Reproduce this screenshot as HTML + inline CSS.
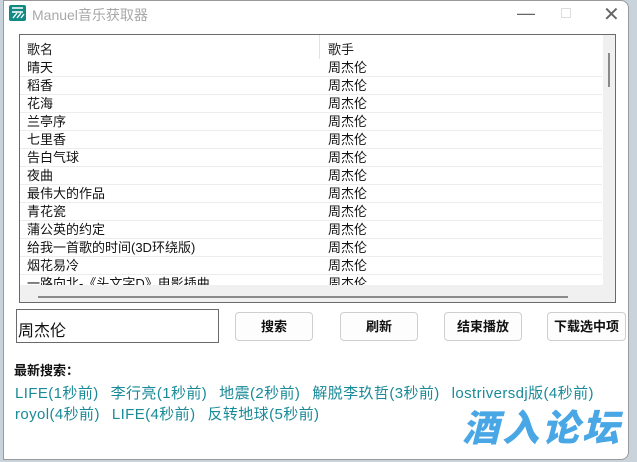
<!DOCTYPE html>
<html><head><meta charset="utf-8"><style>
*{margin:0;padding:0;box-sizing:border-box}
body{width:637px;height:462px;background:#c9d3dc;position:relative;overflow:hidden;font-family:"Liberation Sans","Microsoft YaHei","Noto Sans CJK SC",sans-serif;}
.win{position:absolute;left:3px;top:0;width:626px;height:460px;background:#fff;border:1px solid #9a9a9a;border-radius:0 8px 8px 0;}
.title{position:absolute;left:28px;top:4px;font-size:14px;color:#a8a8a8}
.icon{position:absolute;left:5px;top:4px;width:17px;height:16px;background:#128a84;border-radius:2px}
.list{position:absolute;left:15px;top:33px;width:597px;height:269px;border:1px solid #6a6a6a;background:#fff;overflow:hidden}
.hdr{position:absolute;left:0;top:0;height:24px;width:584px;font-size:13px;color:#222}
.hdr span{position:absolute;top:4px}
.vline{position:absolute;left:299px;top:0;width:1px;height:24px;background:#e2e2e2}
.row{position:absolute;left:0;width:582px;height:18px;border-bottom:1px solid #ececec;font-size:13px;color:#111}
.row span{position:absolute;top:0;line-height:18px}
.vs{position:absolute;right:0;top:0;width:12px;height:251px;background:#f0f0f0}
.vs i{position:absolute;left:5px;top:18px;width:2px;height:34px;background:#8a8a8a}
.hs{position:absolute;left:0;bottom:0;width:597px;height:17px;background:#f0f0f0}
.hs i{position:absolute;left:18px;top:11px;width:530px;height:2px;background:#8a8a8a}
.inp{position:absolute;left:12px;top:308px;width:203px;height:34px;border:1px solid #6a6a6a;font-size:16px;padding:7px 0 0 1px;color:#111}
.btn{position:absolute;top:311px;height:29px;border:1px solid #cfcfcf;border-radius:4px;background:#fdfdfd;font-size:13px;font-weight:bold;text-align:center;line-height:27px;color:#111}
.lbl{position:absolute;left:10px;top:359px;font-size:13px;font-weight:bold;color:#111}
.links{position:absolute;left:11px;top:382px;font-size:15px;line-height:21px;color:#1a8a98;letter-spacing:0.4px}
.links span{margin-right:12px}
.wm{position:absolute;left:458px;top:397px;font-size:37px;font-weight:900;font-style:italic;color:#4aa7e6;letter-spacing:3px}
.ctl{position:absolute;top:0;font-size:18px;color:#666}
</style></head><body>
<div class="win">
<div class="icon"><svg width="17" height="16" viewBox="0 0 17 16"><path d="M3 3h11M3 7h11M4 13l4-5M8 13l4-5M12 13l3-4" stroke="#fff" stroke-width="1.4" fill="none"/></svg></div>
<div class="title">Manuel音乐获取器</div>
<div class="ctl" style="left:513px;top:2px">—</div>
<div style="position:absolute;left:557px;top:7px;width:10px;height:10px;border:1px solid #ddd"></div>
<div class="ctl" style="left:599px;top:1px;font-size:20px">✕</div>
<div class="list">
<div class="hdr"><span style="left:7px">歌名</span><div class="vline"></div><span style="left:308px">歌手</span></div>
<div class="row" style="top:24px"><span style="left:7px">晴天</span><span style="left:308px">周杰伦</span></div>
<div class="row" style="top:42px"><span style="left:7px">稻香</span><span style="left:308px">周杰伦</span></div>
<div class="row" style="top:60px"><span style="left:7px">花海</span><span style="left:308px">周杰伦</span></div>
<div class="row" style="top:78px"><span style="left:7px">兰亭序</span><span style="left:308px">周杰伦</span></div>
<div class="row" style="top:96px"><span style="left:7px">七里香</span><span style="left:308px">周杰伦</span></div>
<div class="row" style="top:114px"><span style="left:7px">告白气球</span><span style="left:308px">周杰伦</span></div>
<div class="row" style="top:132px"><span style="left:7px">夜曲</span><span style="left:308px">周杰伦</span></div>
<div class="row" style="top:150px"><span style="left:7px">最伟大的作品</span><span style="left:308px">周杰伦</span></div>
<div class="row" style="top:168px"><span style="left:7px">青花瓷</span><span style="left:308px">周杰伦</span></div>
<div class="row" style="top:186px"><span style="left:7px">蒲公英的约定</span><span style="left:308px">周杰伦</span></div>
<div class="row" style="top:204px"><span style="left:7px">给我一首歌的时间(3D环绕版)</span><span style="left:308px">周杰伦</span></div>
<div class="row" style="top:222px"><span style="left:7px">烟花易冷</span><span style="left:308px">周杰伦</span></div>
<div class="row" style="top:240px"><span style="left:7px">一路向北-《头文字D》电影插曲</span><span style="left:308px">周杰伦</span></div>
<div class="vs"><i></i></div>
<div class="hs"><i></i></div>
</div>
<div class="inp">周杰伦</div>
<div class="btn" style="left:231px;width:78px">搜索</div>
<div class="btn" style="left:336px;width:78px">刷新</div>
<div class="btn" style="left:440px;width:78px">结束播放</div>
<div class="btn" style="left:543px;width:79px">下载选中项</div>
<div class="lbl">最新搜索：</div>
<div class="links"><span>LIFE(1秒前)</span><span>李行亮(1秒前)</span><span>地震(2秒前)</span><span>解脱李玖哲(3秒前)</span><span>lostriversdj版(4秒前)</span><br><span>royol(4秒前)</span><span>LIFE(4秒前)</span><span>反转地球(5秒前)</span></div>
<div class="wm">酒入论坛</div>
</div>
</body></html>
